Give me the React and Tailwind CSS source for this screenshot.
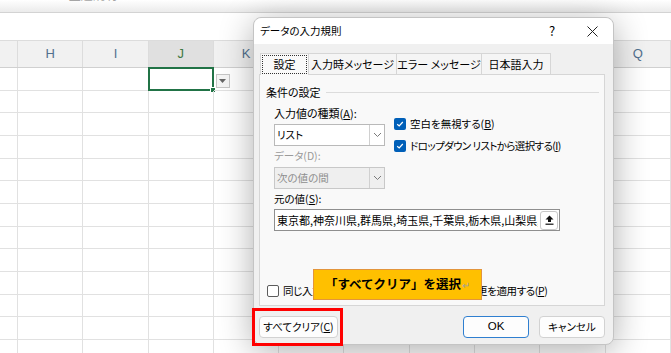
import React from "react";

const cols = ["", "H", "I", "J", "K", "L", "M", "N", "O", "P", "Q"];
const rows = Array.from({ length: 13 }, (_, i) => i);

const jp = "font-['Noto_Sans_CJK_JP',sans-serif] [font-feature-settings:'palt']";

/* ================= SMALL PARTS ================= */
const CheckBox = ({ checked }) =>
  checked ? (
    <span className="w-[12px] h-[12px] rounded-[2px] bg-[#005fb8] flex items-center justify-center shrink-0">
      <svg width="8" height="8" viewBox="0 0 8 8">
        <path d="M1.2 4.2 L3.2 6 L6.8 2" stroke="white" strokeWidth="1.2" fill="none" />
      </svg>
    </span>
  ) : (
    <span className="w-[12px] h-[12px] rounded-[2px] border border-[#5c5c5c] bg-white shrink-0" />
  );

const Chevron = () => (
  <svg width="9" height="6" viewBox="0 0 9 6">
    <path d="M1 1 L4.5 4.5 L8 1" stroke="#7a7a7a" strokeWidth="1" fill="none" />
  </svg>
);

const Select = ({ value, disabled }) => (
  <div
    className={`w-[111px] h-[22px] flex border ${
      disabled
        ? "border-[#c8c8c8] bg-[#efefef] text-[#8e8e8e]"
        : "border-[#b9b9b9] bg-white text-black"
    }`}
  >
    <div className="flex-1 flex items-center pl-[2px]">{value}</div>
    <div className="w-[15px] border-l border-[#d0d0d0] flex items-center justify-center">
      <Chevron />
    </div>
  </div>
);

const Button = ({ children, primary, className = "" }) => (
  <div
    className={`h-[22px] flex items-center justify-center rounded-[4px] bg-[#fdfdfd] ${
      primary ? "border-[1.5px] border-[#2f7fd0]" : "border border-[#d2d2d2]"
    } ${className}`}
  >
    {children}
  </div>
);

const Tab = ({ children, w }) => (
  <div
    className={`${w} bg-[#f5f5f5] border border-l-0 border-b-0 border-[#d6d6d6] flex items-center justify-center whitespace-nowrap`}
  >
    {children}
  </div>
);

const App = () => {
  return (
    <div className="w-[671px] h-[353px] relative overflow-hidden bg-white">
      {/* SHEET */}
      <div className="h-[13px] border-b border-[#d3d3d3] bg-gradient-to-b from-white to-[#ebebeb] overflow-hidden">
        <div className="pl-[55px] -mt-[14px] text-[12px] text-[#a5a5a5] font-['Noto_Sans_CJK_JP',sans-serif]">
          ☐ 主題説明
        </div>
      </div>
      <div className="h-[27px] bg-white" />

      <div className="grid grid-cols-[18px_repeat(10,65.3px)] h-[28px] bg-[#f1f1f1] border-t border-[#dcdcdc] border-b border-b-[#d0d0d0] font-['Liberation_Sans',sans-serif] text-[13px]">
        {cols.map((c) => (
          <div
            key={c || "g"}
            className={`flex items-center justify-center border-r border-[#dcdcdc] ${
              c === "J" ? "bg-[#e0e0e0] text-[#3f7a44]" : "text-[#52708f]"
            }`}
          >
            {c}
          </div>
        ))}
      </div>

      <div className="grid grid-cols-[18px_repeat(10,65.3px)]">
        {rows.map((r) =>
          cols.map((c) => (
            <div
              key={`${r}-${c}`}
              className="h-[22.67px] border-r border-b border-[#e1e1e1] relative"
            >
              {r === 0 && c === "J" && (
                <div className="absolute -left-[1px] -top-[1px] -right-[1px] -bottom-[1px] border-2 border-[#217346]">
                  <div className="absolute -right-[4px] -bottom-[4px] w-[6px] h-[6px] bg-[#217346] border border-white" />
                </div>
              )}
              {r === 0 && c === "K" && (
                <div className="ml-[2px] mt-[6px] w-[14px] h-[14px] border border-[#c6c6c6] bg-[#f5f5f5] flex items-center justify-center">
                  <svg width="7" height="4" viewBox="0 0 7 4">
                    <path d="M0 0 H7 L3.5 4 Z" fill="#666" />
                  </svg>
                </div>
              )}
            </div>
          ))
        )}
      </div>

      {/* DIALOG */}
      <div
        className={`absolute left-[253px] top-[17px] w-[361px] h-[328px] rounded-[8px] border border-[#c4c4c4] bg-[#f0f0f0] shadow-[0_6px_34px_rgba(0,0,0,0.32)] flex flex-col text-[10.5px] text-black ${jp}`}
      >
        {/* TITLE */}
        <div className="h-[26px] bg-white rounded-t-[8px] flex items-center pl-[6px] shrink-0">
          <span className="flex-1">データの入力規則</span>
          <span className="w-[40px] text-center text-[13px]">?</span>
          <span className="w-[40px] mr-[1px] flex items-center justify-center">
            <svg width="11" height="11" viewBox="0 0 11 11">
              <path d="M0.5 0.5 L10.5 10.5 M10.5 0.5 L0.5 10.5" stroke="#222" strokeWidth="1" />
            </svg>
          </span>
        </div>

        <div className="pl-[5px] pr-[8px] pt-[9px] flex-1 flex flex-col">
          {/* TABS */}
          <div className="flex h-[21px] ml-[1px] text-[11px]">
            <div className="w-[49px] bg-[#f9f9f9] border border-b-0 border-[#d6d6d6] p-[1px] relative z-10 -mb-[1px] h-[22px]">
              <div className="h-full border border-dotted border-[#333] flex items-center justify-center">
                設定
              </div>
            </div>
            <Tab w="w-[88px]">入力時メッセージ</Tab>
            <Tab w="w-[85px]">エラー メッセージ</Tab>
            <Tab w="w-[69px]">日本語入力</Tab>
          </div>

          {/* PANEL */}
          <div className="h-[232px] bg-[#f9f9f9] border border-[#d6d6d6] pl-[6px] pr-[5px] pt-[10px] flex flex-col">
            <div className="h-[14px] flex items-center gap-[5px] text-[11px]">
              <span>条件の設定</span>
              <div className="flex-1 h-px bg-[#dcdcdc]" />
            </div>

            <div className="pl-[8px] flex">
              <div className="w-[111px] flex flex-col">
                <div className="mt-[7px] h-[14px] flex items-center text-[11px]">
                  入力値の種類(<u>A</u>):
                </div>
                <div className="mt-[4px]">
                  <Select value="リスト" />
                </div>
                <div className="mt-[3px] h-[14px] flex items-center text-[#9a9a9a]">
                  データ(D):
                </div>
                <div className="mt-[4px]">
                  <Select value="次の値の間" disabled />
                </div>
              </div>

              <div className="ml-[9px] pt-[18px] flex flex-col gap-[8px]">
                <div className="h-[14px] flex items-center gap-[4px]">
                  <CheckBox checked />
                  <span className="whitespace-nowrap">
                    空白を無視する(<u>B</u>)
                  </span>
                </div>
                <div className="h-[14px] flex items-center gap-[4px]">
                  <CheckBox checked />
                  <span className="whitespace-nowrap tracking-[-0.6px]">
                    ドロップダウン リストから選択する(<u>I</u>)
                  </span>
                </div>
              </div>
            </div>

            <div className="pl-[8px]">
              <div className="mt-[3px] h-[14px] flex items-center">
                元の値(<u>S</u>):
              </div>
              <div className="mt-[3px] w-[286px] h-[22px] border border-[#8f8f8f] bg-white flex items-center pl-[2px] pr-[1px]">
                <div className="flex-1 overflow-hidden whitespace-nowrap text-[11px]">
                  東京都,神奈川県,群馬県,埼玉県,千葉県,栃木県,山梨県,静岡県
                </div>
                <div className="ml-[2px] w-[18px] h-[19px] shrink-0 border border-[#c8c8c8] rounded-[3px] bg-white flex items-center justify-center">
                  <svg width="9" height="10" viewBox="0 0 9 10">
                    <path d="M4.5 0.5 L8.5 4.5 H6 V7 H3 V4.5 H0.5 Z" fill="#111" />
                    <rect x="0.5" y="8.6" width="8" height="1.2" fill="#111" />
                  </svg>
                </div>
              </div>
            </div>

            <div className="mt-[52px] h-[15px] flex items-center gap-[4px] pl-[1px]">
              <CheckBox />
              <span className="whitespace-nowrap tracking-[-0.4px]">
                同じ入力規則が設定されたすべてのセルに変更を適用する(<u>P</u>)
              </span>
            </div>
          </div>

          {/* BUTTONS */}
          <div className="mt-[10px] flex items-center">
            <Button className="w-[79px]">
              すべてクリア(<u>C</u>)
            </Button>
            <div className="flex-1" />
            <Button primary className="w-[66px] font-['Liberation_Sans',sans-serif] text-[11.5px]">
              OK
            </Button>
            <Button className="w-[66px] ml-[10px]">キャンセル</Button>
          </div>
        </div>

        {/* ANNOTATIONS */}
        <div className="absolute left-[59px] top-[251px] w-[169px] h-[31px] bg-[#ffc000] border border-[#e3953c] flex items-center justify-center font-['Noto_Sans_CJK_JP',sans-serif] font-bold text-[12.5px] [font-feature-settings:normal]">
          「すべてクリア」を選択
          <span className="text-[#a0a0a0] font-normal text-[10px] ml-[1px]">↵</span>
        </div>
        <div className="absolute -left-[2px] top-[290px] w-[91px] h-[38px] border-[3px] border-[#ff0000]" />
      </div>
    </div>
  );
};

export default App;
